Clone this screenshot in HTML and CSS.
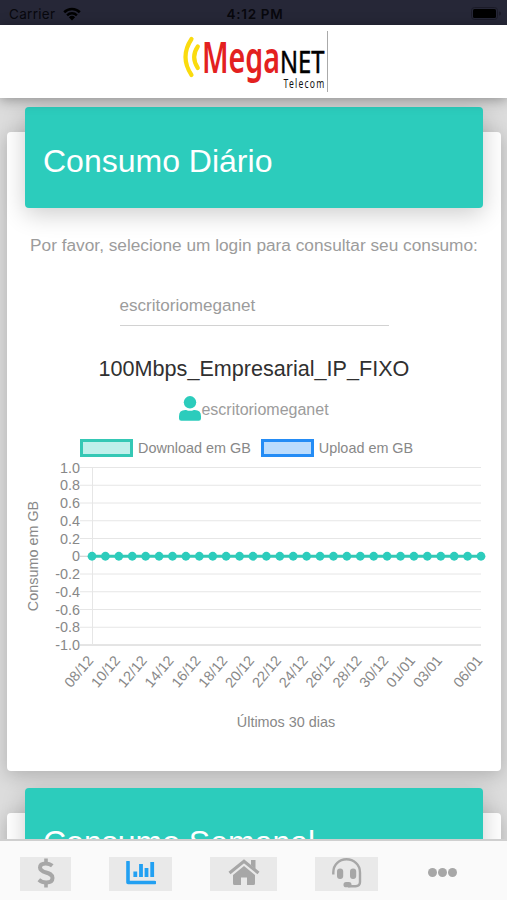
FILE: index.html
```
<!DOCTYPE html>
<html lang="pt-BR">
<head>
    <meta charset="UTF-8">
    <meta name="viewport" content="width=device-width, initial-scale=1.0">
    <title>MegaNET Telecom - Consumo</title>
    <link rel="stylesheet" href="styles.css">
</head>
<body>
    <div class="app">
        <div class="status-bar">
            <div class="carrier">
                <span>Carrier</span>
                <svg width="18" height="14" viewBox="0 0 18 14">
                    <path d="M1.2 5.2a11.2 11.2 0 0 1 15.6 0" fill="none" stroke="#000" stroke-width="2.6"/>
                    <path d="M4.1 8.3a7 7 0 0 1 9.8 0" fill="none" stroke="#000" stroke-width="2.4"/>
                    <path d="M9 13.5 5.9 10.3a4.5 4.5 0 0 1 6.2 0z"/>
                </svg>
            </div>
            <div class="clock">4:12 PM</div>
            <div class="battery">
                <svg width="30" height="13" viewBox="0 0 30 13">
                    <rect x=".5" y=".5" width="26" height="12" rx="3" fill="none" stroke="#1b1b28"/>
                    <rect x="2" y="2" width="23" height="9" rx="1.5"/>
                    <path d="M28 4.5v4a2 2 0 0 0 0-4z" fill="#1b1b28"/>
                </svg>
            </div>
        </div>

        <header class="navbar">
            <svg class="logo" width="148" height="64" viewBox="181 30 148 64">
                <path d="M191.500 39Q179.500 57 191.500 75" class="wave"/>
                <path d="M197.800 46.500Q190.500 57 197.800 68" class="wave"/>
                <text x="202" y="73.300" class="logo-mega" textLength="78" lengthAdjust="spacingAndGlyphs">Mega</text>
                <text x="280" y="73.300" class="logo-net" textLength="44.500" lengthAdjust="spacingAndGlyphs">NET</text>
                <text x="283.500" y="87.500" class="logo-telecom" textLength="42" lengthAdjust="spacingAndGlyphs">Telecom</text>
                <path d="M327.500 31v61" stroke="#aaa"/>
            </svg>
        </header>

        <main>
            <section class="card">
                <div class="card-header"><h2>Consumo Diário</h2></div>
                <p class="help">Por favor, selecione um login para consultar seu consumo:</p>
                <div class="select">escritoriomeganet</div>
                <h3 class="plan">100Mbps_Empresarial_IP_FIXO</h3>
                <div class="user">
                    <svg width="22" height="25" viewBox="0 0 22 25">
                        <circle cx="11" cy="6.300" r="6.200"/>
                        <path d="M0 22.500v-2.200Q0 14 6.300 14h.8q3.900 1.700 7.800 0h.8Q22 14 22 20.300v2.200q0 2.300-2.300 2.300H2.300Q0 24.800 0 22.500z"/>
                    </svg>
                    <span>escritoriomeganet</span>
                </div>
                <div class="legend">
                    <span class="swatch download"></span>
                    <span class="legend-text">Download em GB</span>
                    <span class="swatch upload"></span>
                    <span class="legend-text">Upload em GB</span>
                </div>
                <svg id="chart" width="494" height="280" viewBox="7 460 494 280"></svg>
            </section>

            <section class="card">
                <div class="card-header"><h2>Consumo Semanal</h2></div>
            </section>
        </main>

        <nav class="tabs">
            <a class="tab tab-money">
                <svg width="18" height="30" viewBox="0 0 18 30">
                    <path d="M9 .5v4.500M9 24.500v5" stroke-width="3.600"/>
                    <path d="M15.300 7.800Q12.500 5.500 8.800 5.500 3 5.500 3 9.500c0 6.500 12.500 3.500 12.500 10.500 0 3-2.500 4.500-6.300 4.500q-4.200 0-7.400-2.700" stroke-width="4"/>
                </svg>
            </a>
            <a class="tab tab-usage active">
                <svg width="30" height="24" viewBox="0 0 30 24">
                    <path d="M2 1v20.500h26.500" stroke-width="3.600" stroke-linejoin="round" stroke-linecap="round"/>
                    <path d="M9.300 10.500V16M15 3v13M20.500 7v9M26.200 1v15" stroke-width="3.800"/>
                </svg>
            </a>
            <a class="tab tab-home">
                <svg width="32" height="27" viewBox="0 0 32 27">
                    <path d="M1.500 14 16 2.300 30.500 14" stroke-width="3.200"/>
                    <path d="M23 1h4.500v9L23 6.300z" class="fill"/>
                    <path d="M16 7 27 16v8.500q0 1.500-1.500 1.500H19v-7.500h-6V26H6.500Q5 26 5 24.500V16z" class="fill"/>
                </svg>
            </a>
            <a class="tab tab-support">
                <svg width="30" height="30" viewBox="0 0 30 30">
                    <path d="M1.300 16.500v-2C1.300 6.500 7.500 1.300 14.500 1.300S28 6.500 28 14.500V24q0 4.200-4.500 4.200H16" stroke-width="2.400"/>
                    <rect x="5" y="10.500" width="6.200" height="10.500" rx="3" class="fill"/>
                    <rect x="18" y="10.500" width="6.200" height="10.500" rx="3" class="fill"/>
                    <rect x="11.500" y="24" width="8" height="5.300" rx="2.600" class="fill"/>
                </svg>
            </a>
            <a class="tab-more">
                <i></i><i></i><i></i>
            </a>
        </nav>
    </div>

    <script>
        const chart = document.getElementById('chart');
        const left = 92, right = 481, top0 = 467.5, step = 17.75;
        const dates = ['08/12', '10/12', '12/12', '14/12', '16/12', '18/12', '20/12', '22/12', '24/12',
            '26/12', '28/12', '30/12', '01/01', '03/01', '06/01'];
        const ticks = ['1.0', '0.8', '0.6', '0.4', '0.2', '0', '-0.2', '-0.4', '-0.6', '-0.8', '-1.0'];
        const dx = (right - left) / 29;
        let svg = '';

        // Eixo Y
        ticks.forEach((t, i) => {
            const y = top0 + i * step;
            const cls = (t === '0' || t === '-1.0') ? 'grid strong' : 'grid';
            svg += `<path class="${cls}" d="M80 ${y}H${right}"/>`;
            svg += `<text x="80" y="${y + 5}" text-anchor="end">${t}</text>`;
        });
        svg += `<path class="grid" d="M92.5 ${top0}V${top0 + 10 * step}"/>`;

        // Eixo X, o último rótulo é sempre o dia 30
        dates.forEach((d, i) => {
            const x = left + dx * (i === dates.length - 1 ? 29 : i * 2);
            svg += `<text text-anchor="end" transform="translate(${x + 0.5} 659.5) rotate(-50)" y="2">${d}</text>`;
        });

        // Série
        const zero = top0 + 5 * step;
        svg += `<path class="serie" d="M${left} ${zero}H${right}"/>`;
        for (let i = 0; i < 30; i++) {
            svg += `<circle class="ponto" cx="${left + i * dx}" cy="${zero}" r="4.4"/>`;
        }

        svg += '<text x="286" y="726.5" text-anchor="middle">Últimos 30 dias</text>';
        svg += '<text text-anchor="middle" transform="translate(38 556) rotate(-90)">Consumo em GB</text>';
        chart.innerHTML = svg;
    </script>
</body>
</html>
```
FILE: styles.css
```
:root {
    --color-primary: #2cccbc;
    --color-active: #22a0f2;
    --color-icon: #a7a7a7;
    --text-gray: #9c9c9c;
}

* {
    box-sizing: border-box;
}

body {
    margin: 0;
    font-family: "Liberation Sans", Helvetica, Arial, sans-serif;
    font-weight: 300;
    background-color: #dcdcdc;
    color: var(--text-gray);
}

h2,
h3,
p {
    margin: 0;
    font-weight: 300;
}

.app {
    height: 900px;
    display: flex;
    flex-direction: column;
    overflow: hidden;
}

.status-bar {
    height: 25px;
    flex-shrink: 0;
    display: grid;
    grid-template-columns: 1fr auto 1fr;
    align-items: center;
    padding: 2px 6px 0 9px;
    background-color: #262737;
    color: #08080d;
    font-family: Inter, sans-serif;
    font-size: 13.5px;
    font-weight: 400;
}

.carrier {
    display: flex;
    align-items: center;
    gap: 8px;
    letter-spacing: 0.3px;
}

.clock {
    font-weight: 600;
    letter-spacing: 0.7px;
}

.battery {
    display: flex;
    justify-content: flex-end;
}

.navbar {
    height: 73px;
    flex-shrink: 0;
    display: flex;
    justify-content: center;
    align-items: center;
    background-color: #fff;
    box-shadow: 0 2px 12px rgba(0, 0, 0, 0.35);
    position: relative;
    z-index: 2;
}

.logo {
    display: block;
    margin-left: 3px;
    overflow: visible;
}

.wave {
    fill: none;
    stroke: #fadb0e;
    stroke-width: 4.2;
    stroke-linecap: round;
}

.logo-mega {
    font: 600 43px "Noto Sans", sans-serif;
    fill: #e3211f;
}

.logo-net {
    font: 400 30px "Noto Sans", sans-serif;
    fill: #000;
    stroke: #000;
    stroke-width: 0.5px;
}

.logo-telecom {
    font: 400 12.5px "Noto Sans", sans-serif;
    letter-spacing: 1.8px;
    fill: #111;
}

main {
    flex: 1;
    min-height: 0;
    overflow: hidden;
    padding: 34px 6px 0 7px;
}

.card {
    display: flex;
    flex-direction: column;
    height: 639px;
    margin-bottom: 42px;
    padding: 0 18px;
    background-color: #fff;
    border-radius: 4px;
    box-shadow: 0 4px 18px rgba(0, 0, 0, 0.2);
}

.card-header {
    height: 101px;
    flex-shrink: 0;
    display: flex;
    align-items: center;
    margin-top: -25px;
    padding: 6px 18px 0;
    background-color: var(--color-primary);
    border-radius: 4px;
    box-shadow: 0 6px 24px rgba(0, 0, 0, 0.2);
}

.card-header h2 {
    font-size: 32px;
    line-height: 38px;
    color: #fff;
}

.help {
    margin: 26px -10px 0;
    font-size: 17.25px;
    line-height: 22px;
    text-align: center;
    white-space: nowrap;
}

.select {
    width: 269px;
    height: 36px;
    align-self: center;
    margin-top: 34px;
    padding-top: 3px;
    border-bottom: 1px solid #d2d2d2;
    font-size: 17.1px;
    line-height: 26px;
}

.plan {
    margin-top: 29px;
    font-size: 21.6px;
    line-height: 28px;
    color: #303030;
    text-align: center;
}

.user {
    display: flex;
    justify-content: center;
    align-items: center;
    height: 25px;
    margin-top: 13px;
    font-size: 16px;
}

.user svg {
    fill: var(--color-primary);
}

.user span {
    padding-top: 2px;
}

.legend {
    display: flex;
    align-items: center;
    height: 19px;
    margin-top: 17px;
    padding-left: 55px;
    font-size: 14.4px;
    color: #888;
}

.swatch {
    width: 53px;
    height: 18px;
    border: 3px solid;
}

.download {
    border-color: #35c8b5;
    background-color: #c0f0eb;
}

.upload {
    border-color: #248cf5;
    background-color: #bbdcfd;
}

.legend-text {
    margin: 0 10px 0 5px;
}

#chart {
    display: block;
    flex-shrink: 0;
    margin: 3px -18px 0;
}

#chart text {
    font-size: 14.4px;
    fill: #888;
}

.grid {
    stroke: #e6e6e6;
}

.strong {
    stroke: #cacaca;
}

.serie {
    stroke: #35c8b5;
    stroke-width: 3;
}

.ponto {
    fill: var(--color-primary);
}

.tabs {
    height: 61px;
    flex-shrink: 0;
    display: flex;
    align-items: flex-start;
    padding: 16px 50px 0 20px;
    background-color: #fafafa;
    border-top: 2px solid #cfcfcf;
    position: relative;
    z-index: 2;
}

.tab {
    display: flex;
    justify-content: center;
    height: 34px;
    margin-right: 38px;
    background-color: #e9e9e9;
}

.tab svg {
    fill: none;
    stroke: var(--color-icon);
    color: var(--color-icon);
}

.tab .fill {
    fill: currentColor;
    stroke: none;
}

.tab.active svg {
    stroke: var(--color-active);
}

.tab-money {
    width: 51px;
    padding-top: 1px;
}

.tab-usage {
    width: 63px;
    padding-top: 4px;
}

.tab-home {
    width: 67px;
    padding-top: 2px;
}

.tab-support {
    width: 63px;
    padding-top: 1px;
}

.tab-more {
    display: flex;
    gap: 1px;
    margin: 11px 0 0 12px;
}

.tab-more i {
    width: 9px;
    height: 9px;
    border-radius: 50%;
    background-color: var(--color-icon);
}
```
